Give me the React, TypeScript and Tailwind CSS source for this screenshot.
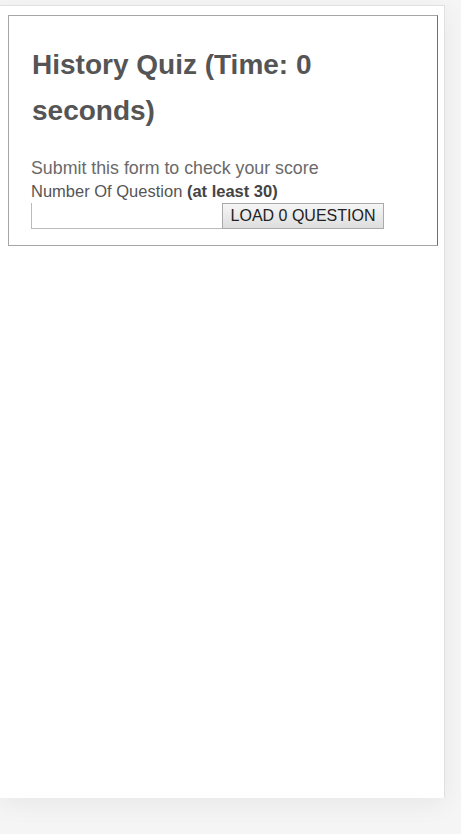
export default function App() {
  return (
    <div className="min-h-[834px] w-[461px] bg-[#f5f5f5] pt-[5px]" style={{ fontFamily: '"Liberation Sans", Arial, sans-serif' }}>
      <div className="h-[793px] w-[445px] border-t border-r border-[#e0e0e0] bg-white shadow-[0_6px_24px_rgba(0,0,0,0.06)] pt-[9px] pl-[8px]">
        <div className="w-[430px] border border-[#a6a6a6] border-r-[#707070] px-[22px] pt-[26px] pb-[16px]">
          <h1 className="pl-[1px] text-[28px] font-bold leading-[46px] text-[#555]">History Quiz (Time: 0 seconds)</h1>
          <p className="mt-[23px] text-[17.8px] leading-[22px] text-[#6a6a6a]">Submit this form to check your score</p>
          <p className="text-[16.5px] leading-[24px] text-[#555]">
            Number Of Question <b className="text-[#444]">(at least 30)</b>
          </p>
          <div className="flex">
            <input className="h-[26px] w-[191px] border-l border-b border-[#bbb] outline-none" />
            <button className="h-[26px] w-[162px] border border-[#aaa] bg-gradient-to-b from-[#f6f6f6] to-[#dedede] text-[16px] text-[#222]">
              LOAD 0 QUESTION
            </button>
          </div>
        </div>
      </div>
    </div>
  );
}
